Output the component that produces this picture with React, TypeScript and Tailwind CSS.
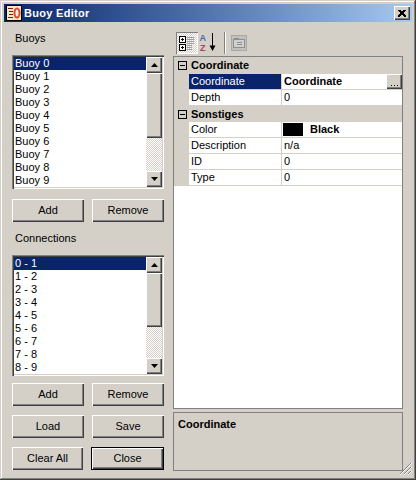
const font = { fontFamily: '"Liberation Sans", Arial, sans-serif' }

const raised = 'shadow-[inset_1px_1px_0_#ffffff,inset_-1px_-1px_0_#404040,inset_-2px_-2px_0_#808080]'
const checker = 'bg-[repeating-conic-gradient(#d4d0c8_0_25%,#ffffff_0_50%)] bg-[length:2px_2px]'

function Btn({ label, isDefault }: { label: string; isDefault?: boolean }) {
  if (isDefault) {
    return (
      <div className="flex-1 h-[23px] border border-black bg-[#d4d0c8] shadow-[inset_1px_1px_0_#ffffff,inset_-1px_-1px_0_#404040,inset_-2px_-2px_0_#808080] flex items-center justify-center text-[11px] text-black">
        {label}
      </div>
    )
  }
  return (
    <div className={`flex-1 h-[23px] bg-[#d4d0c8] ${raised} flex items-center justify-center text-[11px] text-black`}>
      {label}
    </div>
  )
}

function Arrow({ up }: { up?: boolean }) {
  return (
    <div className={`w-[16px] h-[16px] bg-[#d4d0c8] ${raised} flex items-center justify-center`}>
      <svg width="7" height="4" viewBox="0 0 7 4">
        {up ? <path d="M3.5 0L7 4H0z" fill="#000" /> : <path d="M0 0h7L3.5 4z" fill="#000" />}
      </svg>
    </div>
  )
}

function ListBox({ items, h, thumb }: { items: string[]; h: string; thumb: string }) {
  return (
    <div className={`${h} bg-white p-[2px] flex shadow-[inset_1px_1px_0_#808080,inset_2px_2px_0_#404040,inset_-1px_-1px_0_#ffffff,inset_-2px_-2px_0_#d4d0c8]`}>
      <div className="flex-1 min-w-0 overflow-hidden">
        {items.map((item, i) => (
          <div
            key={item}
            className={`h-[13px] leading-[13px] pl-[1px] text-[11px] ${i === 0 ? 'bg-[#0a246a] text-white' : 'text-black'}`}
          >
            {item}
          </div>
        ))}
      </div>
      <div className="w-[16px] flex flex-col">
        <Arrow up />
        <div className={`${thumb} bg-[#d4d0c8] ${raised}`} />
        <div className={`flex-1 ${checker}`} />
        <Arrow />
      </div>
    </div>
  )
}

function MinusBox() {
  return (
    <div className="w-[9px] h-[9px] border border-black bg-[#d4d0c8] flex items-center justify-center">
      <div className="w-[5px] h-[1px] bg-black" />
    </div>
  )
}

function Category({ label, first }: { label: string; first?: boolean }) {
  return (
    <div className={`${first ? 'h-[17px]' : 'h-[16px]'} bg-[#d4d0c8] flex items-center`}>
      <div className="w-[15px] flex justify-center pl-[1px]">
        <MinusBox />
      </div>
      <span className="pl-[2px] text-[11px] font-bold text-black">{label}</span>
    </div>
  )
}

function Row({ name, selected, children }: { name: string; selected?: boolean; children: React.ReactNode }) {
  return (
    <div className="h-[16px] flex border-b border-[#d4d0c8] bg-white">
      <div className="w-[15px] bg-[#d4d0c8]" />
      <div className={`w-[92px] pl-[2px] text-[11px] leading-[15px] ${selected ? 'bg-[#0a246a] text-white' : 'text-black'}`}>
        {name}
      </div>
      <div className="w-[1px] bg-[#d4d0c8]" />
      <div className="flex-1 flex items-center text-[11px] leading-[15px] text-black">{children}</div>
    </div>
  )
}

function CategorizedIcon() {
  return (
    <svg width="16" height="16" viewBox="0 0 16 16" shapeRendering="crispEdges">
      <rect x="0.5" y="1.5" width="6" height="6" fill="#fff" stroke="#000" />
      <path d="M2 4.5h3M3.5 3v3" stroke="#000" />
      <rect x="0.5" y="9.5" width="6" height="6" fill="#fff" stroke="#000" />
      <path d="M2 12.5h3M3.5 11v3" stroke="#000" />
      <path d="M8 2.5h7M8 4.5h7M8 6.5h7M8 8.5h7M8 10.5h5M8 12.5h5M8 14.5h5" stroke="#a0a0a0" />
    </svg>
  )
}

function AlphaIcon() {
  return (
    <svg width="18" height="21" viewBox="0 0 18 21">
      <text x="0.5" y="8.5" fontSize="9" fontWeight="bold" fill="#4a6cb8" fontFamily="Liberation Sans">A</text>
      <text x="1" y="18.6" fontSize="9" fontWeight="bold" fill="#a84060" fontFamily="Liberation Sans">Z</text>
      <path d="M13.5 1v14" stroke="#000" strokeWidth="1" />
      <path d="M10.5 13.5h6L13.5 19z" fill="#000" />
    </svg>
  )
}

function PagesIcon() {
  return (
    <svg width="16" height="16" viewBox="0 0 16 16" shapeRendering="crispEdges">
      <rect x="0.5" y="0.5" width="15" height="15" fill="#c0c0bc" stroke="#a8a8a4" />
      <rect x="2.5" y="4.5" width="11" height="8" fill="#d0d0cc" stroke="#909090" />
      <path d="M2.5 3.5h5M6 7.5h5M6 9.5h5" stroke="#909090" />
    </svg>
  )
}

function TitleIcon() {
  return (
    <svg width="16" height="16" viewBox="0 0 16 16">
      <rect width="16" height="16" fill="#000" />
      <rect x="1" y="1" width="14" height="14" fill="#f4e8c8" />
      <path d="M2 3.5h5M3 6.5h4M3 9.5h4M2 12.5h5" stroke="#802010" />
      <ellipse cx="11" cy="8" rx="3.5" ry="5.5" fill="#e0482c" />
      <ellipse cx="11" cy="8" rx="1.5" ry="3.5" fill="#fff4e0" />
    </svg>
  )
}

function Grip() {
  return (
    <svg className="absolute right-[4px] bottom-[5px]" width="13" height="13" viewBox="0 0 13 13" shapeRendering="crispEdges">
      <path d="M12 1L1 12M12 5L5 12M12 9L9 12" stroke="#808080" strokeWidth="1" fill="none" />
      <path d="M13 1L1 13M13 5L5 13M13 9L9 13" stroke="#ffffff" strokeWidth="1" fill="none" />
    </svg>
  )
}

export default function App() {
  const buoys = Array.from({ length: 10 }, (_, i) => `Buoy ${i}`)
  const connections = Array.from({ length: 9 }, (_, i) => `${i} - ${i + 1}`)

  return (
    <div
      style={font}
      className="relative w-[416px] h-[480px] bg-[#d4d0c8] p-[4px] flex flex-col shadow-[inset_-1px_-1px_0_#404040,inset_1px_1px_0_#d4d0c8,inset_-2px_-2px_0_#808080,inset_2px_2px_0_#ffffff]"
    >
      {/* Title bar */}
      <div className="h-[18px] flex items-center justify-between pl-[2px] pr-[2px] bg-gradient-to-r from-[#0a246a] to-[#a6caf0]">
        <div className="flex items-center gap-[2px]">
          <TitleIcon />
          <span className="text-white text-[11px] font-bold tracking-[0.3px]">Buoy Editor</span>
        </div>
        <div className={`w-[16px] h-[14px] bg-[#d4d0c8] ${raised} flex items-center justify-center`}>
          <svg width="8" height="7" viewBox="0 0 8 7" shapeRendering="crispEdges">
            <path d="M0.5 0L7.5 7M7.5 0L0.5 7M1.5 0L8 6.5M6.5 0L0 6.5" stroke="#000" fill="none" />
          </svg>
        </div>
      </div>

      <div className="flex-1 flex pl-[8px]">
        {/* Left column */}
        <div className="w-[152px] flex flex-col">
          <div className="mt-[10px] h-[13px] leading-[13px] pl-[3px] text-[11px] text-black">Buoys</div>
          <div className="mt-[10px]">
            <ListBox items={buoys} h="h-[134px]" thumb="h-[65px]" />
          </div>
          <div className="mt-[10px] flex gap-[8px]">
            <Btn label="Add" />
            <Btn label="Remove" />
          </div>
          <div className="mt-[10px] h-[13px] leading-[13px] pl-[3px] text-[11px] text-black">Connections</div>
          <div className="mt-[10px]">
            <ListBox items={connections} h="h-[121px]" thumb="h-[54px]" />
          </div>
          <div className="mt-[7px] flex gap-[8px]">
            <Btn label="Add" />
            <Btn label="Remove" />
          </div>
          <div className="mt-[9px] flex gap-[8px]">
            <Btn label="Load" />
            <Btn label="Save" />
          </div>
          <div className="mt-[9px] flex gap-[8px]">
            <Btn label="Clear All" />
            <Btn label="Close" isDefault />
          </div>
        </div>

        {/* Property grid */}
        <div className="w-[230px] ml-[9px] flex flex-col">
          <div className="mt-[8px] h-[26px] flex items-start">
            <div className={`ml-[3px] mt-[2px] w-[22px] h-[22px] flex items-center justify-center ${checker} shadow-[inset_1px_1px_0_#808080,inset_-1px_-1px_0_#ffffff]`}>
              <CategorizedIcon />
            </div>
            <div className="ml-[1px] mt-[2px]">
              <AlphaIcon />
            </div>
            <div className="ml-[7px] mt-[2px] w-[2px] h-[22px] border-l border-[#808080] border-r-[1px] border-r-white" />
            <div className="ml-[5px] mt-[5px]">
              <PagesIcon />
            </div>
          </div>

          <div className="h-[353px] border border-[#808080] bg-white flex flex-col">
            <Category label="Coordinate" first />
            <Row name="Coordinate" selected>
              <span className="pl-[2px] flex-1 font-bold">Coordinate</span>
              <div className={`w-[16px] h-[15px] bg-[#d4d0c8] ${raised} flex items-end justify-center pb-[3px]`}>
                <svg width="7" height="1" viewBox="0 0 7 1" shapeRendering="crispEdges">
                  <path d="M0 0h1v1H0zM3 0h1v1H3zM6 0h1v1H6z" fill="#000" />
                </svg>
              </div>
            </Row>
            <Row name="Depth">
              <span className="pl-[2px]">0</span>
            </Row>
            <Category label="Sonstiges" />
            <Row name="Color">
              <div className="ml-[1px] w-[20px] h-[13px] bg-black" />
              <span className="pl-[7px] font-bold">Black</span>
            </Row>
            <Row name="Description">
              <span className="pl-[2px]">n/a</span>
            </Row>
            <Row name="ID">
              <span className="pl-[2px]">0</span>
            </Row>
            <Row name="Type">
              <span className="pl-[2px]">0</span>
            </Row>
          </div>

          <div className="mt-[3px] h-[59px] border border-[#808080] px-[4px] pt-[3px] text-[11px] font-bold text-black">
            Coordinate
          </div>
        </div>
      </div>

      <Grip />
    </div>
  )
}
